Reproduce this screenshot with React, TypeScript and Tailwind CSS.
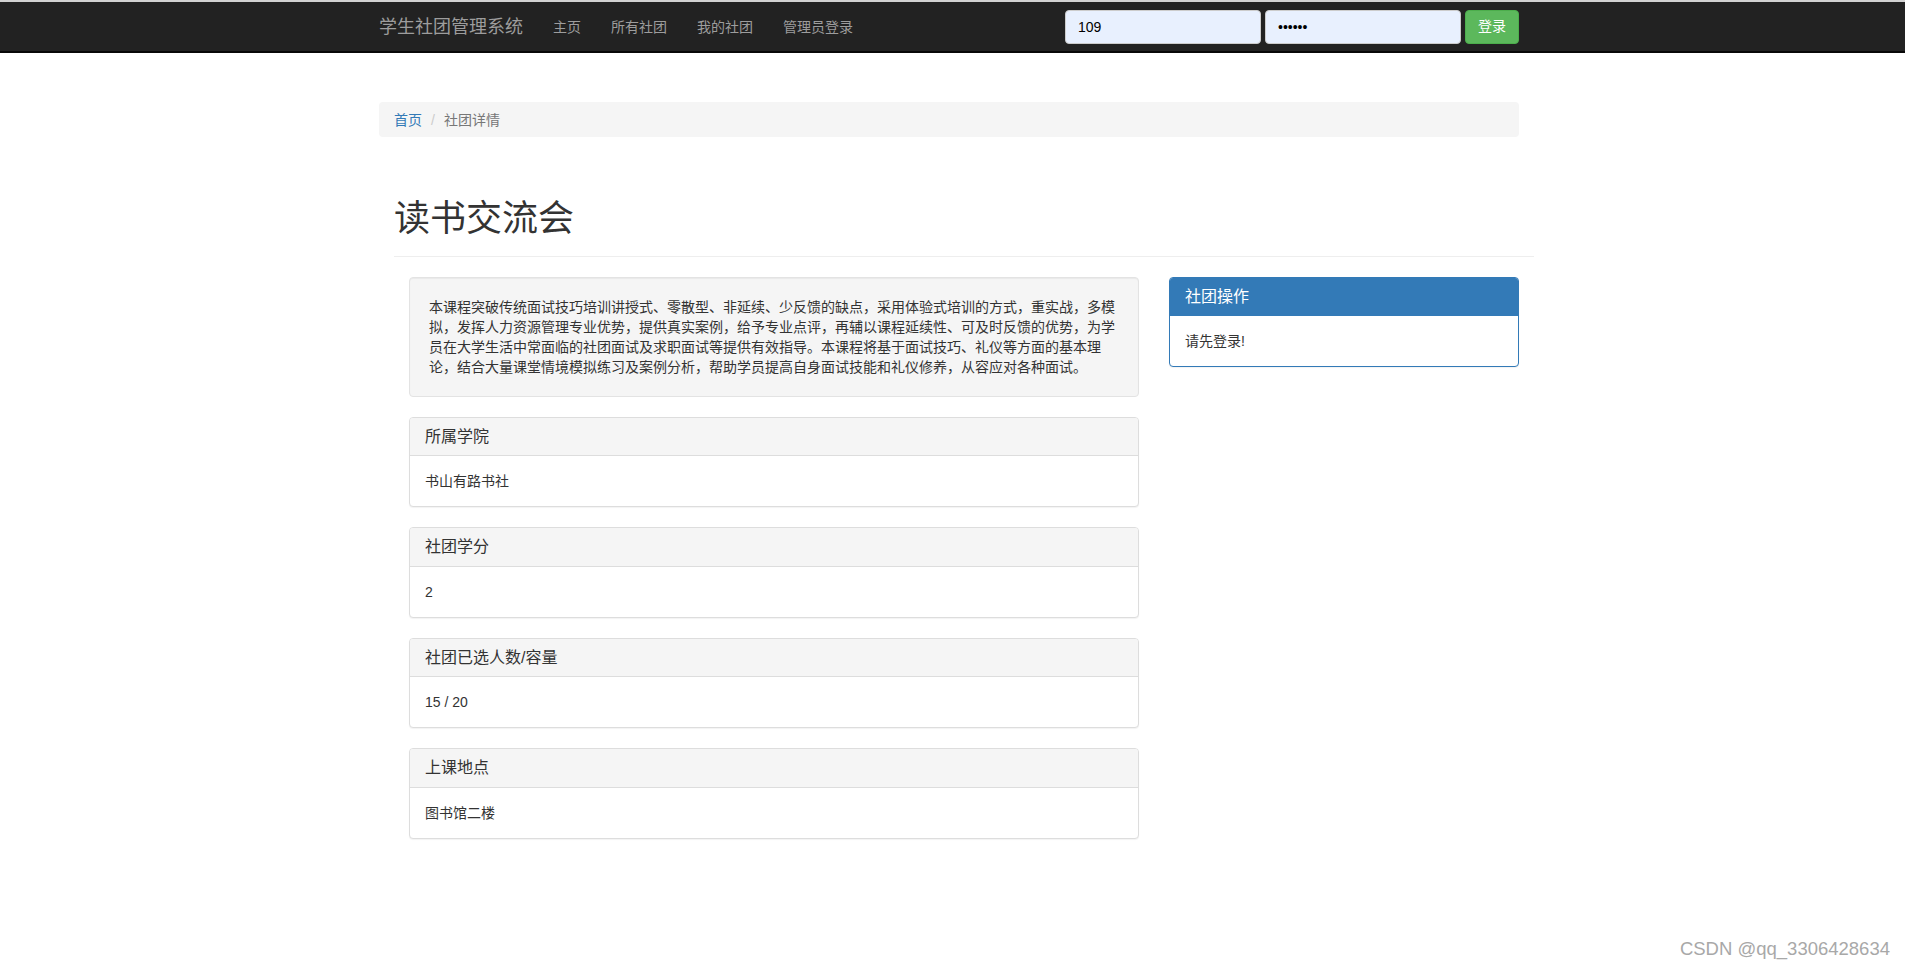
import React from "react";

const font = {
  fontFamily:
    '"Liberation Sans", "Helvetica Neue", Helvetica, Arial, "Noto Sans CJK SC", sans-serif',
};

function InfoPanel({ title, body }: { title: string; body: string }) {
  return (
    <div className="mb-[20px] rounded-[4px] border border-[#ddd] bg-white shadow-[0_1px_1px_rgba(0,0,0,0.05)]">
      <div className="rounded-t-[3px] border-b border-[#ddd] bg-[#f5f5f5] px-[15px] py-[10px]">
        <h3 className="text-[16px] leading-[17.6px] text-[#333]">{title}</h3>
      </div>
      <div className="p-[15px] text-[14px] leading-[20px] text-[#333]">{body}</div>
    </div>
  );
}

export default function App() {
  const desc =
    "本课程突破传统面试技巧培训讲授式、零散型、非延续、少反馈的缺点，采用体验式培训的方式，重实战，多模拟，发挥人力资源管理专业优势，提供真实案例，给予专业点评，再辅以课程延续性、可及时反馈的优势，为学员在大学生活中常面临的社团面试及求职面试等提供有效指导。本课程将基于面试技巧、礼仪等方面的基本理论，结合大量课堂情境模拟练习及案例分析，帮助学员提高自身面试技能和礼仪修养，从容应对各种面试。";

  return (
    <div className="relative min-h-[969px] overflow-x-hidden bg-white" style={font}>
      <div className="h-[2px] bg-[#d2d2d2]" />
      <nav className="h-[51px] border-b-2 border-[#080808] bg-[#222]">
        <div className="mx-auto flex h-full w-[1147px] items-center pr-[7px]">
          <span className="pr-[15px] text-[18px] leading-[20px] text-[#9d9d9d]">学生社团管理系统</span>
          <span className="px-[15px] text-[14px] leading-[20px] text-[#9d9d9d]">主页</span>
          <span className="px-[15px] text-[14px] leading-[20px] text-[#9d9d9d]">所有社团</span>
          <span className="px-[15px] text-[14px] leading-[20px] text-[#9d9d9d]">我的社团</span>
          <span className="px-[15px] text-[14px] leading-[20px] text-[#9d9d9d]">管理员登录</span>
          <div className="ml-auto flex items-center gap-[4px]">
            <input
              readOnly
              defaultValue="109"
              className="h-[34px] w-[196px] rounded-[4px] border border-[#ccc] bg-[#e8f0fe] px-[12px] text-[14px] text-black outline-none"
              style={font}
            />
            <input
              readOnly
              type="password"
              defaultValue="123456"
              className="h-[34px] w-[196px] rounded-[4px] border border-[#ccc] bg-[#e8f0fe] px-[12px] text-[14px] text-black outline-none"
              style={font}
            />
            <button className="h-[34px] w-[54px] rounded-[4px] border border-[#4cae4c] bg-[#5cb85c] text-[14px] text-white">
              登录
            </button>
          </div>
        </div>
      </nav>

      <div className="mx-auto w-[1147px] pr-[7px]">
        <div className="mt-[49px] flex h-[35px] items-center rounded-[4px] bg-[#f5f5f5] px-[15px] text-[14px] leading-[20px]">
          <span className="text-[#337ab7]">首页</span>
          <span className="px-[9px] text-[#ccc]">/</span>
          <span className="text-[#777]">社团详情</span>
        </div>

        <div className="ml-[15px] w-[1140px]">
          <div className="mb-[20px] mt-[60px] border-b border-[#eee] pb-[9px]">
            <h1 className="mb-[8px] pt-[2px] text-[36px] font-normal leading-[39.6px] text-[#333]">读书交流会</h1>
          </div>

          <div className="flex">
            <div className="w-[760px] px-[15px]">
              <div className="mb-[20px] rounded-[4px] border border-[#e3e3e3] bg-[#f5f5f5] p-[19px] text-[14px] leading-[20px] text-[#333] shadow-[inset_0_1px_1px_rgba(0,0,0,0.05)]">
                {desc}
              </div>
              <InfoPanel title="所属学院" body="书山有路书社" />
              <InfoPanel title="社团学分" body="2" />
              <InfoPanel title="社团已选人数/容量" body="15 / 20" />
              <InfoPanel title="上课地点" body="图书馆二楼" />
            </div>
            <div className="w-[380px] px-[15px]">
              <div className="rounded-[4px] border border-[#337ab7] bg-white shadow-[0_1px_1px_rgba(0,0,0,0.05)]">
                <div className="rounded-t-[3px] border-b border-[#337ab7] bg-[#337ab7] px-[15px] py-[10px]">
                  <h3 className="text-[16px] leading-[17.6px] text-white">社团操作</h3>
                </div>
                <div className="p-[15px] text-[14px] leading-[20px] text-[#333]">请先登录!</div>
              </div>
            </div>
          </div>
        </div>
      </div>

      <div className="absolute right-[15px] top-[937px] text-[18.5px] leading-[24px] text-[#a8a8a8]">
        CSDN @qq_3306428634
      </div>
    </div>
  );
}
